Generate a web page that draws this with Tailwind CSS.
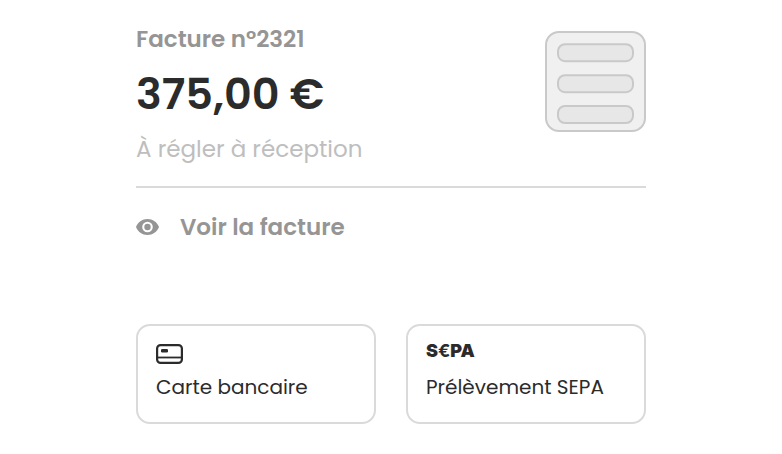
<!DOCTYPE html>
<html lang="fr">
<head>
<meta charset="utf-8">
<meta name="viewport" content="width=device-width, initial-scale=1">
<title>Facture n°2321</title>
<script src="https://cdn.jsdelivr.net/npm/@tailwindcss/browser@4"></script>
</head>
<body class="bg-white font-[Poppins,Inter,sans-serif] text-[#2b2b2b]">
<main class="mx-auto flex max-w-[510px] flex-col pt-6">
  <header class="flex items-start justify-between border-b-2 border-[#dadada] pb-[22px]">
    <div class="flex flex-col">
      <p class="text-[23px] leading-[30px] font-semibold text-[#959595]">Facture n°2321</p>
      <h1 class="mt-[10px] text-[43px] leading-[60px] font-semibold">375,00 €</h1>
      <p class="mt-[10px] text-[23px] leading-[30px] text-[#bebebe]">À régler à réception</p>
    </div>
    <svg class="mt-[7px] shrink-0" width="101" height="101" viewBox="0 0 101 101" stroke="#c9c9c9" stroke-width="2" aria-hidden="true">
      <rect x="1" y="1" width="99" height="99" rx="13" fill="#f0f0f0"/>
      <g fill="#e7e7e7">
        <rect x="13" y="13.2" width="75" height="17" rx="7"/>
        <rect x="13" y="44.2" width="75" height="17" rx="7"/>
        <rect x="13" y="75" width="75" height="17" rx="7"/>
      </g>
    </svg>
  </header>
  <a href="#facture" class="mt-6 flex items-center self-start text-[23px] leading-[30px] font-semibold text-[#959595]">
    <svg class="mr-[21px]" width="23" height="16" viewBox="0 0 23 16" fill="currentColor" aria-hidden="true">
      <path fill-rule="evenodd" d="M11.5 0C6.3 0 1.9 3.2 0 8c1.9 4.800 6.300 8 11.500 8S21.100 12.800 23 8C21.100 3.200 16.700 0 11.500 0Zm0 13.300a5.300 5.300 0 1 1 0-10.600 5.300 5.300 0 0 1 0 10.600Zm0-2.100a3.200 3.200 0 1 0 0-6.400 3.200 3.200 0 0 0 0 6.400Z"/>
    </svg>
    Voir la facture
  </a>
  <div class="mt-[82px] grid grid-cols-2 gap-[30px]">
    <button type="button" class="flex flex-col items-start rounded-[14px] border-2 border-[#dadada] px-[18px] pt-[18px] pb-5 text-left">
      <span class="flex h-5 items-center">
        <svg width="27" height="20" viewBox="0 0 27 20" fill="none" stroke="#2b2b2b" stroke-width="2.200" aria-hidden="true">
          <rect x="1.100" y="1.100" width="24.800" height="17.800" rx="3.500"/>
          <path d="M1 13.500h25" stroke-width="1.800"/>
          <rect x="5" y="5" width="7" height="3.500" rx="1.300" fill="#2b2b2b" stroke="none"/>
        </svg>
      </span>
      <span class="mt-2 text-[20px] leading-[30px]">Carte bancaire</span>
    </button>
    <button type="button" class="flex flex-col items-start rounded-[14px] border-2 border-[#dadada] px-[18px] pt-[18px] pb-5 text-left">
      <span class="flex h-5 items-start font-[Inter,sans-serif] text-[18px] leading-[14px] font-black" aria-hidden="true"><span>S</span><span class="font-bold">€</span><span>PA</span></span>
      <span class="mt-2 text-[20px] leading-[30px]">Prélèvement SEPA</span>
    </button>
  </div>
</main>
</body>
</html>
